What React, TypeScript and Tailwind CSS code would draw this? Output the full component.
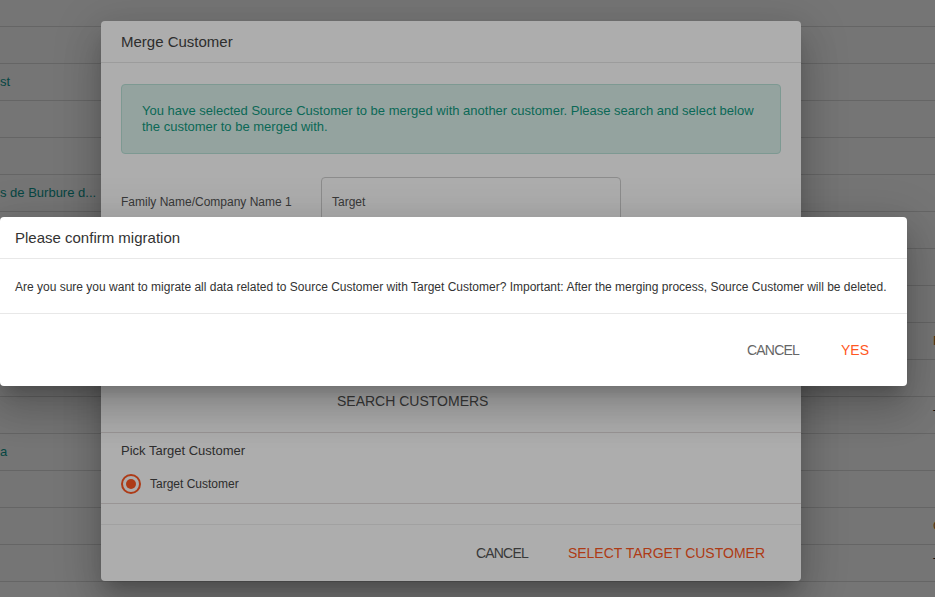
import React from "react";

const rows = [
  { left: "", right: "", rightColor: "" },
  { left: "st", right: "", rightColor: "" },
  { left: "", right: "", rightColor: "" },
  { left: "", right: "", rightColor: "" },
  { left: "s de Burbure d...", right: "", rightColor: "" },
  { left: "", right: "", rightColor: "" },
  { left: "", right: "", rightColor: "" },
  { left: "", right: "", rightColor: "" },
  { left: "", right: "F", rightColor: "text-[#b8731a]" },
  { left: "", right: "", rightColor: "" },
  { left: "", right: "T", rightColor: "text-[#222]" },
  { left: "a", right: "", rightColor: "" },
  { left: "", right: "", rightColor: "" },
  { left: "", right: "G", rightColor: "text-[#b8731a]" },
  { left: "", right: "T", rightColor: "text-[#222]" },
  { left: "", right: "", rightColor: "" },
];

const dialogShadow =
  "shadow-[0_11px_15px_-7px_rgba(0,0,0,0.2),0_24px_38px_3px_rgba(0,0,0,0.14),0_9px_46px_8px_rgba(0,0,0,0.12)]";

function FieldRow({ label, value }: { label: string; value: string }) {
  return (
    <div className="flex items-center mb-[10px]">
      <div className="w-[200px] text-[12px] text-[#555]">{label}</div>
      <div className="w-[300px] h-[50px] flex items-center px-[10px] border border-[#cfcfcf] rounded-[4px] text-[12px] text-[#555]">
        {value}
      </div>
    </div>
  );
}

export default function App() {
  return (
    <div className="relative w-[935px] h-[597px] overflow-hidden bg-white font-['Liberation_Sans',Arial,sans-serif]">
      {/* page behind */}
      <div className="flex flex-col">
        <div className="h-[27px] border-b border-[#ddd]" />
        {rows.map((r, i) => (
          <div key={i} className="h-[37px] flex items-center border-b border-[#ddd] text-[13px]">
            <div className="w-[933px] shrink-0 text-[#0e9a92]">{r.left}</div>
            <div className={r.rightColor}>{r.right}</div>
          </div>
        ))}
      </div>

      {/* first backdrop */}
      <div className="absolute inset-0 bg-black/[0.32]" />

      {/* merge customer dialog */}
      <div className={`absolute left-[101px] top-[21px] w-[700px] h-[560px] bg-white rounded-[4px] flex flex-col ${dialogShadow}`}>
        <div className="h-[42px] flex items-center px-5 pt-[2px] border-b border-[#e6e6e6] text-[15px] text-[#444]">
          Merge Customer
        </div>
        <div className="px-5 pt-[21px]">
          <div className="h-[70px] px-5 flex items-center rounded-[4px] border border-[#b8e2d8] bg-[#daf1eb] text-[13px] leading-[16px] text-[#119a80]">
            You have selected Source Customer to be merged with another customer. Please search and select below the customer to be merged with.
          </div>
          <div className="mt-[23px]">
            <FieldRow label="Family Name/Company Name 1" value="Target" />
            <FieldRow label="Family Name/Company Name 2" value="" />
            <FieldRow label="Customer Number" value="" />
          </div>
          <div className="ml-[200px] mt-[36px] h-[36px] flex items-center">
            <button className="px-4 text-[14px] text-[#555] uppercase">Search Customers</button>
          </div>
        </div>
        <div className="mt-[13px] border-t border-[#e2dcdc] px-5 pt-[8px] pb-[9px]">
          <div className="text-[13px] text-[#444]">Pick Target Customer</div>
          <div className="mt-[13px] flex items-center gap-[9px]">
            <span className="w-[20px] h-[20px] rounded-full border-2 border-[#ff5722] flex items-center justify-center">
              <span className="w-[10px] h-[10px] rounded-full bg-[#ff5722]" />
            </span>
            <span className="text-[12px] text-[#444]">Target Customer</span>
          </div>
        </div>
        <div className="border-t border-[#e2dcdc] h-[21px]" />
        <div className="flex-1 border-t border-[#eee] flex items-center justify-end gap-[40px] pr-[36px] pt-[1px]">
          <button className="text-[14px] text-[#555] uppercase tracking-[-0.8px]">Cancel</button>
          <button className="text-[14px] text-[#ff5722] uppercase">Select Target Customer</button>
        </div>
      </div>

      {/* second backdrop */}
      <div className="absolute inset-0 bg-black/[0.32]" />

      {/* confirm dialog */}
      <div className={`absolute left-0 top-[217px] w-[907px] h-[169px] bg-white rounded-[4px] flex flex-col ${dialogShadow}`}>
        <div className="h-[42px] flex items-center px-[15px] pt-[2px] border-b border-[#e8e8e8] text-[15px] text-[#333]">
          Please confirm migration
        </div>
        <div className="h-[55px] flex items-center px-[15px] pt-[2px] border-b border-[#e8e8e8] text-[12px] text-[#333]">
          Are you sure you want to migrate all data related to Source Customer with Target Customer? Important: After the merging process, Source Customer will be deleted.
        </div>
        <div className="flex-1 flex items-center justify-end gap-[42px] pr-[38px]">
          <button className="text-[14px] text-[#666] uppercase tracking-[-0.8px]">Cancel</button>
          <button className="text-[14px] text-[#ff5722] uppercase">Yes</button>
        </div>
      </div>
    </div>
  );
}
